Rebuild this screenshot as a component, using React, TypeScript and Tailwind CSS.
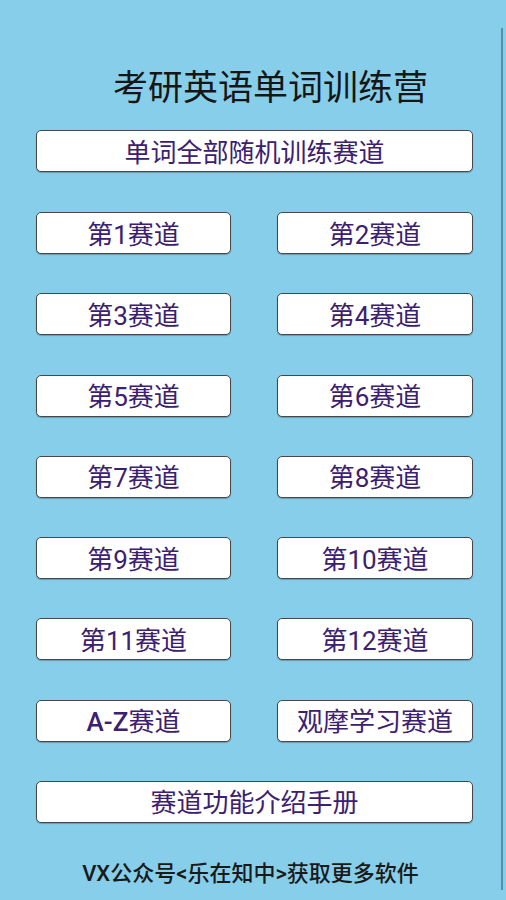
const tracks = [
  '第1赛道',
  '第2赛道',
  '第3赛道',
  '第4赛道',
  '第5赛道',
  '第6赛道',
  '第7赛道',
  '第8赛道',
  '第9赛道',
  '第10赛道',
  '第11赛道',
  '第12赛道',
  'A-Z赛道',
  '观摩学习赛道',
];

const btn =
  "h-[42px] pt-[3px] bg-white border-[1.5px] border-[#474747] rounded-[5px] flex items-center justify-center text-[#3b2070] text-[26px] leading-none shadow-[0_1px_1px_rgba(0,0,0,0.25)]";

const App = () => {
  return (
    <div className="w-[506px] h-[900px] bg-[#87ceea] font-['Roboto','Noto_Sans_CJK_SC',sans-serif] overflow-hidden">
      {/* content frame with the dark edge on the right */}
      <div className="mt-[28px] h-[862px] w-[503px] border-r-2 border-[#5a8ea4] flex flex-col">
        <h1 className="mt-[41px] h-[40px] leading-[40px] pl-[40px] text-center text-[35px] font-normal text-[#161616]">
          考研英语单词训练营
        </h1>

        <button className={`${btn} mt-[21px] ml-[36px] w-[437px]`}>单词全部随机训练赛道</button>

        <div className="mt-[40px] ml-[36px] w-[437px] grid grid-cols-[195px_196px] gap-x-[46px] gap-y-[39.3px]">
          {tracks.map((t) => (
            <button key={t} className={btn}>
              {t.startsWith('A-Z') ? (
                <>
                  <span className="font-medium">A-Z</span>赛道
                </>
              ) : (
                t
              )}
            </button>
          ))}
        </div>

        <button className={`${btn} mt-[39px] ml-[36px] w-[437px]`}>赛道功能介绍手册</button>

        <p className="mt-[36px] h-[30px] leading-[30px] text-center text-[22px] font-medium text-[#1a1a1a]">
          VX公众号&lt;乐在知中&gt;获取更多软件
        </p>
      </div>
    </div>
  );
};

export default App;
